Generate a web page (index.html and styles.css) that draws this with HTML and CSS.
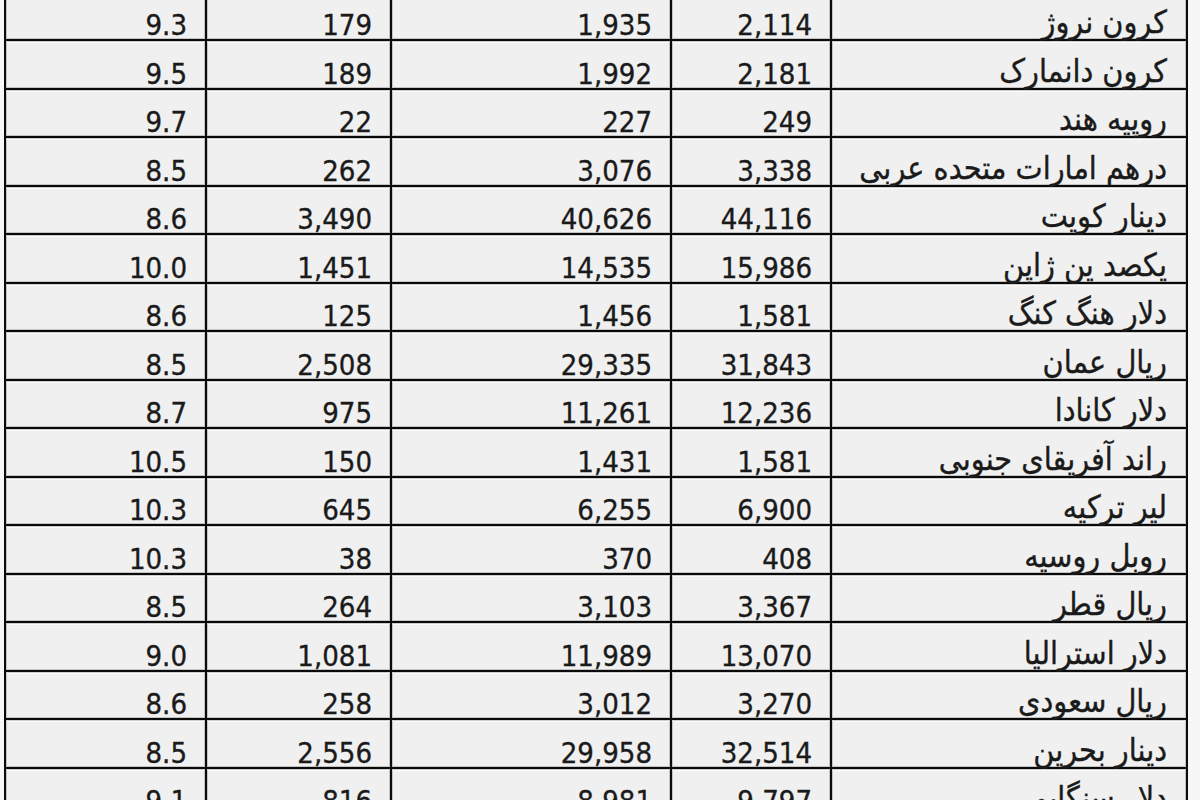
FILE: index.html
```html
<!DOCTYPE html>
<html lang="fa">
<head>
<meta charset="utf-8">
<title>نرخ ارز</title>
<link rel="stylesheet" href="styles.css">
</head>
<body>
<div class="sheet" dir="rtl">
  <div class="cell name"><span>کرون نروژ</span></div><div class="cell"><span>2,114</span></div><div class="cell"><span>1,935</span></div><div class="cell"><span>179</span></div><div class="cell"><span>9.3</span></div>
  <div class="cell name"><span>کرون دانمارک</span></div><div class="cell"><span>2,181</span></div><div class="cell"><span>1,992</span></div><div class="cell"><span>189</span></div><div class="cell"><span>9.5</span></div>
  <div class="cell name"><span>روپیه هند</span></div><div class="cell"><span>249</span></div><div class="cell"><span>227</span></div><div class="cell"><span>22</span></div><div class="cell"><span>9.7</span></div>
  <div class="cell name"><span>درهم امارات متحده عربی</span></div><div class="cell"><span>3,338</span></div><div class="cell"><span>3,076</span></div><div class="cell"><span>262</span></div><div class="cell"><span>8.5</span></div>
  <div class="cell name"><span>دینار کویت</span></div><div class="cell"><span>44,116</span></div><div class="cell"><span>40,626</span></div><div class="cell"><span>3,490</span></div><div class="cell"><span>8.6</span></div>
  <div class="cell name"><span>یکصد ین ژاپن</span></div><div class="cell"><span>15,986</span></div><div class="cell"><span>14,535</span></div><div class="cell"><span>1,451</span></div><div class="cell"><span>10.0</span></div>
  <div class="cell name"><span>دلار هنگ کنگ</span></div><div class="cell"><span>1,581</span></div><div class="cell"><span>1,456</span></div><div class="cell"><span>125</span></div><div class="cell"><span>8.6</span></div>
  <div class="cell name"><span>ریال عمان</span></div><div class="cell"><span>31,843</span></div><div class="cell"><span>29,335</span></div><div class="cell"><span>2,508</span></div><div class="cell"><span>8.5</span></div>
  <div class="cell name"><span>دلار کانادا</span></div><div class="cell"><span>12,236</span></div><div class="cell"><span>11,261</span></div><div class="cell"><span>975</span></div><div class="cell"><span>8.7</span></div>
  <div class="cell name"><span>راند آفریقای جنوبی</span></div><div class="cell"><span>1,581</span></div><div class="cell"><span>1,431</span></div><div class="cell"><span>150</span></div><div class="cell"><span>10.5</span></div>
  <div class="cell name"><span>لیر ترکیه</span></div><div class="cell"><span>6,900</span></div><div class="cell"><span>6,255</span></div><div class="cell"><span>645</span></div><div class="cell"><span>10.3</span></div>
  <div class="cell name"><span>روبل روسیه</span></div><div class="cell"><span>408</span></div><div class="cell"><span>370</span></div><div class="cell"><span>38</span></div><div class="cell"><span>10.3</span></div>
  <div class="cell name"><span>ریال قطر</span></div><div class="cell"><span>3,367</span></div><div class="cell"><span>3,103</span></div><div class="cell"><span>264</span></div><div class="cell"><span>8.5</span></div>
  <div class="cell name"><span>دلار استرالیا</span></div><div class="cell"><span>13,070</span></div><div class="cell"><span>11,989</span></div><div class="cell"><span>1,081</span></div><div class="cell"><span>9.0</span></div>
  <div class="cell name"><span>ریال سعودی</span></div><div class="cell"><span>3,270</span></div><div class="cell"><span>3,012</span></div><div class="cell"><span>258</span></div><div class="cell"><span>8.6</span></div>
  <div class="cell name"><span>دینار بحرین</span></div><div class="cell"><span>32,514</span></div><div class="cell"><span>29,958</span></div><div class="cell"><span>2,556</span></div><div class="cell"><span>8.5</span></div>
  <div class="cell name"><span>دلار سنگاپور</span></div><div class="cell"><span>9,797</span></div><div class="cell"><span>8,981</span></div><div class="cell"><span>816</span></div><div class="cell"><span>9.1</span></div>
</div>
</body>
</html>
```

FILE: styles.css
```css
html, body {
  margin: 0;
  padding: 0;
  background: #f7f7f7;
  overflow: hidden;
}

.sheet {
  display: grid;
  grid-template-columns: 354px 158px 278px 183px 199px;
  grid-auto-rows: 46.5px;
  gap: 2px;
  padding: 2px;
  width: max-content;
  margin: -9.5px 0 0 4px;
  background: #0a0a0a;
}

.cell {
  background: #f0f0f0;
  box-shadow: inset 0 0 0 1px rgba(0, 0, 0, 0.18), inset 0 2px 0 #fbfbfb;
  display: flex;
  align-items: flex-end;
  justify-content: flex-start;
  padding: 0 18px 0 8px;
  font-family: "DejaVu Sans Condensed", "DejaVu Sans", sans-serif;
  font-stretch: condensed;
  font-size: 29px;
  line-height: 34px;
  color: #1a1a1a;
  -webkit-text-stroke: 0.35px #1a1a1a;
  white-space: nowrap;
}

.cell span {
  display: block;
  margin-bottom: -3px;
}

.name {
  padding-right: 19px;
  font-size: 32px;
}

.name span {
  margin-bottom: 0;
}
```
